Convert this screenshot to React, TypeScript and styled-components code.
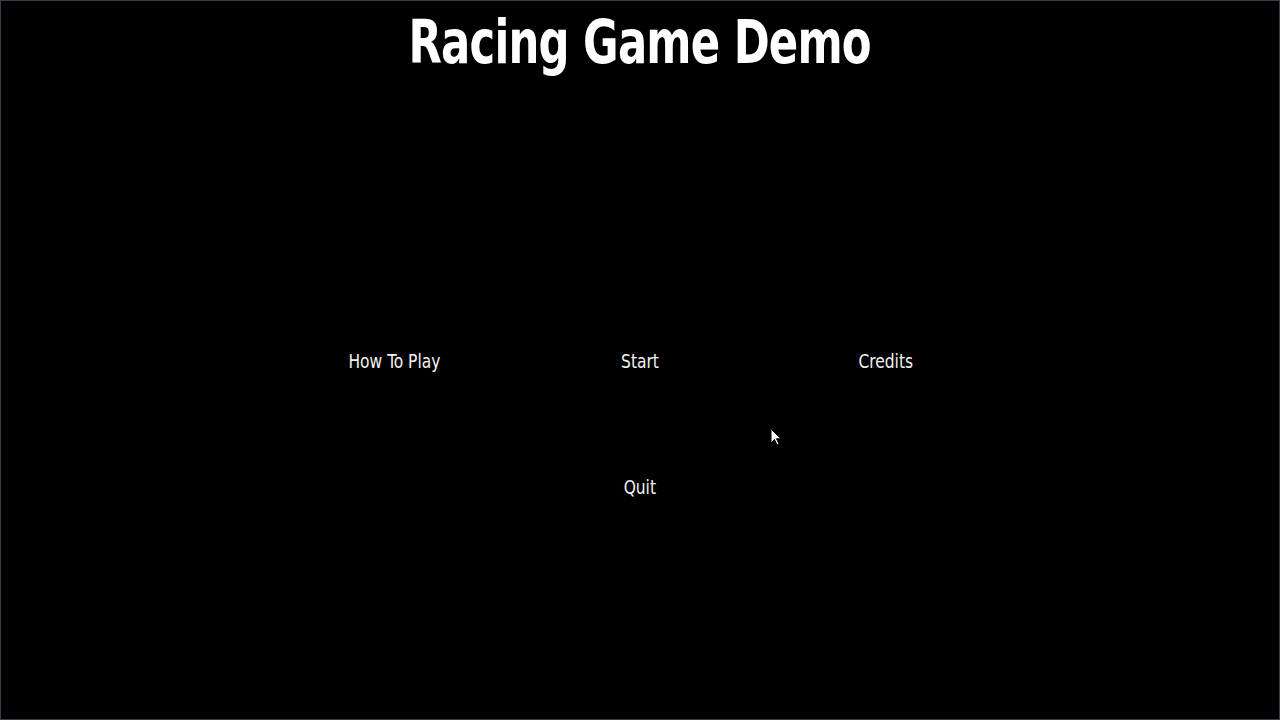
import { FC } from "react";
import styled, { createGlobalStyle } from "styled-components";

const GlobalStyle = createGlobalStyle`
  html, body {
    margin: 0;
    padding: 0;
    background: #000;
  }
  #root {
    height: 720px;
  }
`;

const Screen = styled.div`
  position: relative;
  box-sizing: border-box;
  width: 1280px;
  height: 720px;
  background: #000;
  border: 1px solid #3c3c4a;
  display: flex;
  flex-direction: column;
  align-items: center;
  overflow: hidden;
`;

const Title = styled.h1`
  margin: 0;
  padding-top: 5px;
  font-family: "DejaVu Sans Condensed", "DejaVu Sans", sans-serif;
  font-weight: bold;
  font-size: 61px;
  line-height: 72px;
  letter-spacing: -1px;
  color: #fff;
  transform: scaleX(0.79);
`;

const Menu = styled.div`
  margin-top: 271px;
  display: grid;
  grid-template-columns: repeat(3, 246px);
  row-gap: 102px;
  justify-items: center;
`;

const MenuItem = styled.div<{ $col?: number }>`
  grid-column: ${(p) => p.$col ?? "auto"};
  font-family: "DejaVu Sans Condensed", "DejaVu Sans", sans-serif;
  font-size: 20px;
  line-height: 24px;
  color: #f2f2f2;
  cursor: pointer;
  transform: scaleX(0.86);
`;

const Pointer = styled.svg`
  position: absolute;
  left: 769px;
  top: 427px;
`;

const App: FC = () => {
  return (
    <Screen>
      <GlobalStyle />
      <Title>Racing Game Demo</Title>
      <Menu>
        <MenuItem>How To Play</MenuItem>
        <MenuItem>Start</MenuItem>
        <MenuItem>Credits</MenuItem>
        <MenuItem $col={2}>Quit</MenuItem>
      </Menu>
      <Pointer width="12" height="19" viewBox="0 0 12 19">
        <path
          d="M1 1 L1 15 L4.5 11.5 L7 17 L9 16 L6.5 10.8 L11 10.8 Z"
          fill="#fff"
          stroke="#000"
          strokeWidth="1"
        />
      </Pointer>
    </Screen>
  );
};

export default App;
